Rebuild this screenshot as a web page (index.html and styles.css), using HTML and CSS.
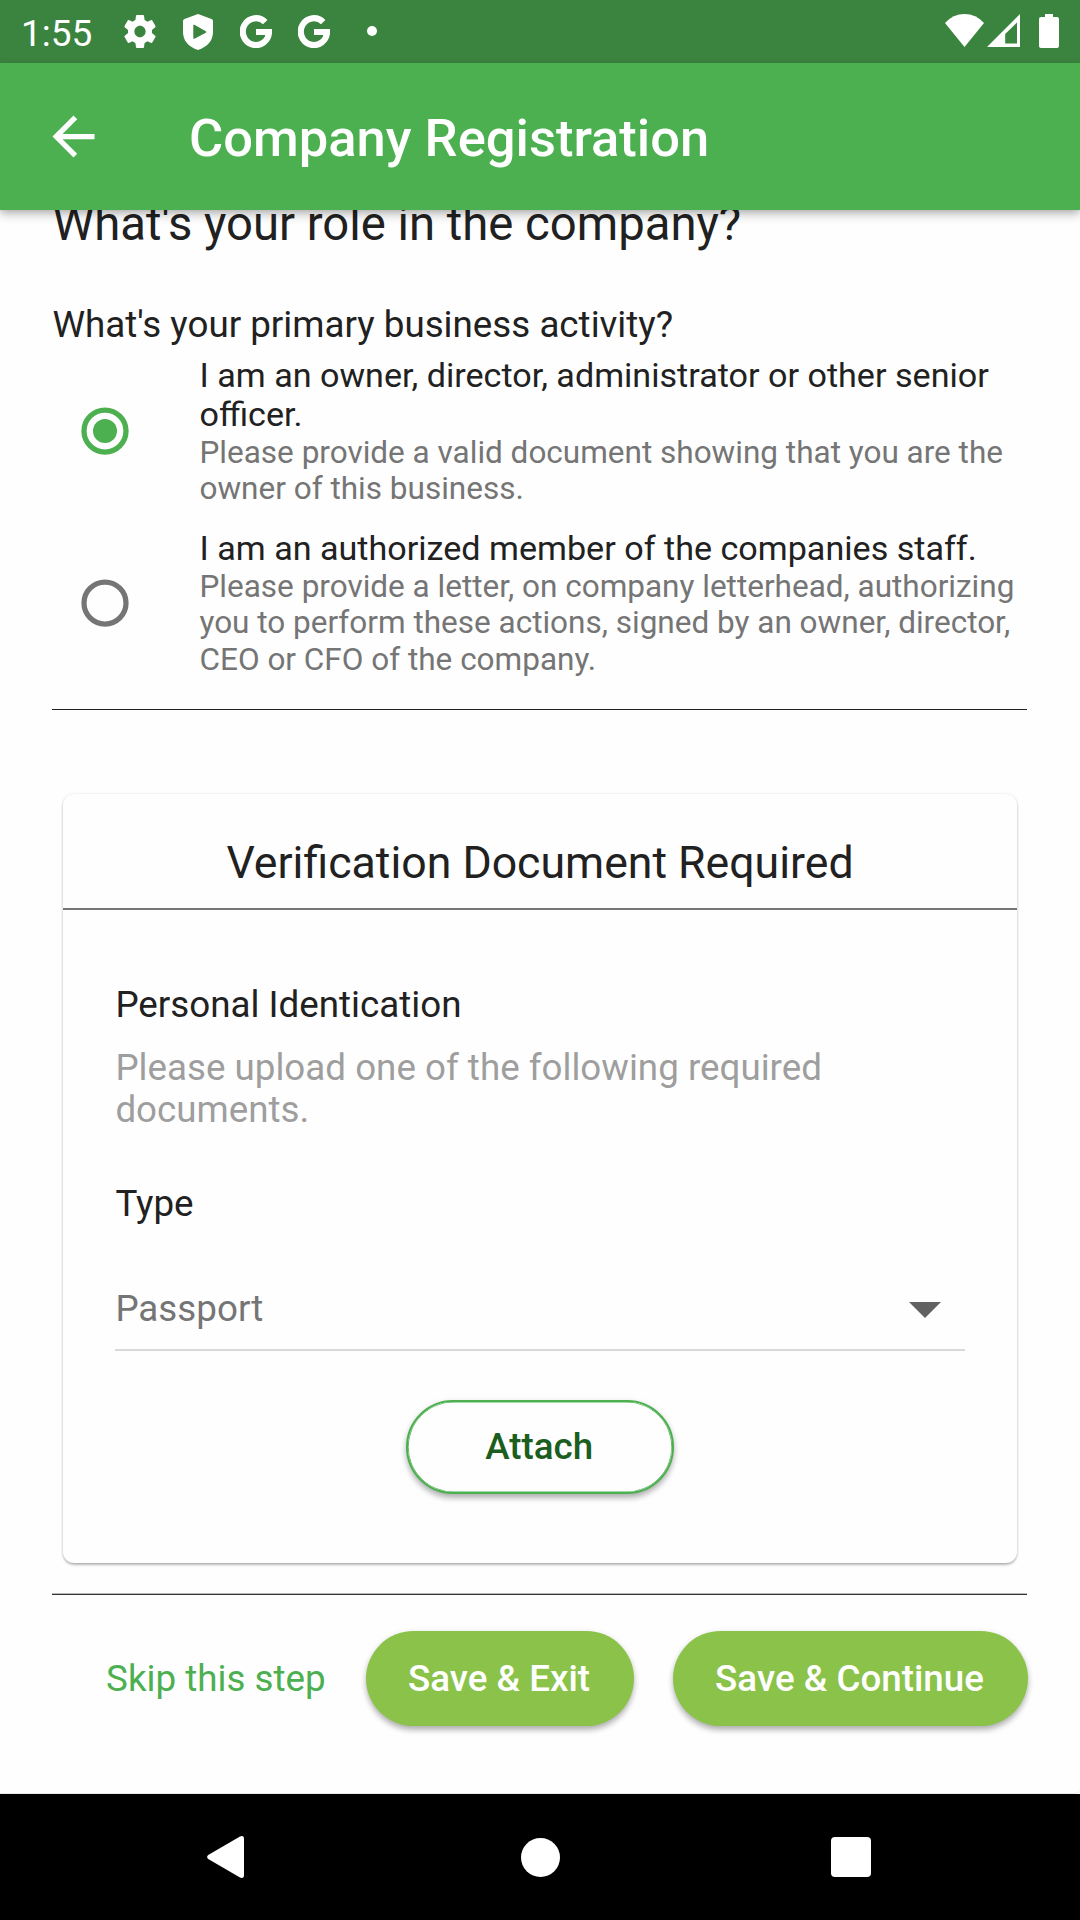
FILE: index.html
```html
<!DOCTYPE html>
<html lang="en">
<head>
<meta charset="utf-8">
<title>Company Registration</title>
<link rel="stylesheet" href="styles.css">
</head>
<body>
<div class="screen">
  <div class="status-bar">
    <span class="clock">1:55</span>
    <div class="notifications">
      <svg class="icon-gear" viewBox="2 2 20 20" preserveAspectRatio="none"><path fill="#fff" d="M19.43 12.98c.04-.32.07-.64.07-.98s-.03-.66-.07-.98l2.11-1.65c.19-.15.24-.42.12-.64l-2-3.46c-.12-.22-.39-.3-.61-.22l-2.49 1c-.52-.4-1.08-.73-1.69-.98l-.38-2.65C14.46 2.18 14.25 2 14 2h-4c-.25 0-.46.18-.49.42l-.38 2.65c-.61.25-1.17.59-1.69.98l-2.49-1c-.23-.09-.49 0-.61.22l-2 3.46c-.13.22-.07.49.12.64l2.11 1.65c-.04.32-.07.65-.07.98s.03.66.07.98l-2.11 1.65c-.19.15-.24.42-.12.64l2 3.46c.12.22.39.3.61.22l2.49-1c.52.4 1.08.73 1.69.98l.38 2.65c.03.24.24.42.49.42h4c.25 0 .46-.18.49-.42l.38-2.65c.61-.25 1.17-.59 1.69-.98l2.49 1c.23.09.49 0 .61-.22l2-3.46c.12-.22.07-.49-.12-.64l-2.11-1.65zM12 15.5c-1.93 0-3.5-1.57-3.5-3.5s1.57-3.5 3.5-3.5 3.5 1.57 3.5 3.5-1.57 3.5-3.5 3.5z"/></svg>
      <svg class="icon-shield" viewBox="0 0 30 36"><path fill="#fff" fill-rule="evenodd" d="M15 0 28.500 5Q30 5.600 30 7V18C30 26.500 24.500 33 15 36 5.500 33 0 26.500 0 18V7Q0 5.600 1.500 5ZM10.300 11.500V24Q10.300 25.200 11.400 24.700L22.800 18.700Q23.700 18 22.800 17.300L11.400 10.800Q10.300 10.300 10.300 11.500Z"/></svg>
      <svg class="icon-g" viewBox="0 0 32 33"><path fill="none" stroke="#fff" stroke-width="6.200" d="M25.200 7.200A13.100 13.400 0 1 0 29 17H16"/></svg>
      <svg class="icon-g" viewBox="0 0 32 33"><path fill="none" stroke="#fff" stroke-width="6.200" d="M25.200 7.200A13.100 13.400 0 1 0 29 17H16"/></svg>
      <span class="more-dot"></span>
    </div>
    <div class="indicators">
      <svg class="icon-wifi" viewBox="0 0 39 33"><path fill="#fff" d="M0 9Q8 0 19.500 0T39 9L19.500 33Z"/></svg>
      <svg class="icon-signal" viewBox="0 0 33 33"><path fill="#fff" fill-rule="evenodd" d="M33 0V33H0ZM30 8.500 18.200 20V29.500H30Z"/></svg>
      <svg class="icon-battery" viewBox="0 0 20 34"><path fill="#fff" d="M6 0H14V3H18Q20 3 20 5V32Q20 34 18 34H2Q0 34 0 32V5Q0 3 2 3H6Z"/></svg>
    </div>
  </div>

  <header class="app-bar">
    <svg class="icon-back" viewBox="0 0 24 24"><path fill="#fff" d="M20 11H7.830l5.590-5.590L12 4l-8 8 8 8 1.410-1.410L7.830 13H20v-2z"/></svg>
    <h1 class="app-title">Company Registration</h1>
  </header>

  <main class="content">
    <h2 class="role-heading">What's your role in the company?</h2>
    <h3 class="question">What's your primary business activity?</h3>

    <div class="option">
      <svg class="radio" viewBox="0 0 48 48"><circle cx="24" cy="24" r="21" fill="none" stroke="#4caf50" stroke-width="5.250"/><circle cx="24" cy="24" r="12" fill="#4caf50"/></svg>
      <div class="option-text">
        <div class="option-title">I am an owner, director, administrator or other senior<br>officer.</div>
        <div class="option-sub">Please provide a valid document showing that you are the<br>owner of this business.</div>
      </div>
    </div>
    <div class="option">
      <svg class="radio" viewBox="0 0 48 48"><circle cx="24" cy="24" r="21" fill="none" stroke="#757575" stroke-width="5.250"/></svg>
      <div class="option-text">
        <div class="option-title">I am an authorized member of the companies staff.</div>
        <div class="option-sub">Please provide a letter, on company letterhead, authorizing<br>you to perform these actions, signed by an owner, director,<br>CEO or CFO of the company.</div>
      </div>
    </div>
    <hr class="divider divider-top">

    <section class="card">
      <h2 class="card-title">Verification Document Required</h2>
      <div class="card-body">
        <h3 class="label">Personal Identication</h3>
        <p class="hint">Please upload one of the following required<br>documents.</p>
        <div class="label type-label">Type</div>
        <div class="select">
          <span>Passport</span>
          <svg class="icon-caret" viewBox="0 0 32 16"><path fill="#616161" d="M0 0H32L16 16Z"/></svg>
        </div>
        <button class="btn btn-outline">Attach</button>
      </div>
    </section>
    <hr class="divider divider-bottom">

    <div class="actions">
      <a class="skip">Skip this step</a>
      <button class="btn btn-exit">Save &amp; Exit</button>
      <button class="btn btn-continue">Save &amp; Continue</button>
    </div>
  </main>

  <nav class="nav-bar">
    <svg class="nav-back" viewBox="0 0 37 42"><path fill="#fff" d="M1.200 19 33 .500Q37-1 37 3V39Q37 43 33 41.500L1.200 23Q-1 21 1.200 19Z"/></svg>
    <span class="nav-home"></span>
    <span class="nav-recent"></span>
  </nav>
</div>
</body>
</html>
```
FILE: styles.css
```css
* { box-sizing: border-box; margin: 0; padding: 0; }
body { font-family: Roboto, "Liberation Sans", sans-serif; font-size: 36.75px; color: #212121; background: #fefefe; }
h1, h2, h3 { font-weight: 400; }
svg { display: block; flex: none; }

.screen { width: 1080px; height: 1920px; display: flex; flex-direction: column; overflow: hidden; }

.status-bar { height: 63px; flex: none; display: flex; background: #3b843f; color: #fff; }
.clock { width: 124px; padding-left: 21px; font-size: 37px; line-height: 67px; }
.notifications { display: flex; align-items: flex-start; padding-top: 15px; }
.icon-gear { width: 32px; height: 33px; }
.icon-shield { width: 30px; height: 36px; margin: -1px 27px 0; }
.icon-g { width: 32px; height: 33px; margin-right: 26px; }
.more-dot { width: 10px; height: 10px; margin: 11px 0 0 11px; border-radius: 50%; background: #fff; }
.indicators { display: flex; margin-left: auto; padding: 14px 21px 0 0; }
.icon-wifi { width: 39px; height: 33px; }
.icon-signal { width: 33px; height: 33px; margin-left: 3px; }
.icon-battery { width: 20px; height: 34px; margin-left: 19px; }

.app-bar { position: relative; z-index: 1; height: 147px; flex: none; display: flex; align-items: center; padding-left: 42px; background: #4caf50; color: #fff; box-shadow: 0 5px 10px rgba(0, 0, 0, .2), 0 2px 6px rgba(0, 0, 0, .14); }
.icon-back { width: 63px; height: 63px; }
.app-title { margin-left: 84px; padding-top: 3px; font-size: 52.5px; font-weight: 500; line-height: 62px; }

.content { flex: 1; min-height: 0; overflow: hidden; padding: 0 52px 0 52.4px; border-bottom: 1px solid #e8e8e8; border-bottom-right-radius: 5px; background: #fefefe; }
.role-heading { margin-top: -13px; font-size: 47.25px; line-height: 55px; }
.question { margin-top: 51px; font-size: 36.75px; line-height: 43px; }
.option { display: flex; align-items: center; margin-top: 21px; padding-left: 28.6px; }
.question + .option { margin-top: 10px; }
.radio { width: 48px; height: 48px; margin: 0 70.5px 2px 0; }
.option-text { white-space: nowrap; }
.option-title { font-size: 34.125px; line-height: 39px; }
.option-sub { padding-top: .6px; font-size: 31.5px; line-height: 36.75px; color: #757575; }
.divider { border: 0; height: 1px; width: 975px; background: #212121; }
.divider-top { margin-top: 30.05px; }

.card { width: 954px; height: 769px; margin: 84px 10.6px 0; border-radius: 11px; background: #fefefe; box-shadow: 0 3px 3px -1px rgba(0, 0, 0, .16), 0 1px 3px rgba(0, 0, 0, .25); }
.card-title { height: 116px; padding-top: 43px; border-bottom: 2px solid #777; font-size: 44.625px; line-height: 52px; text-align: center; }
.card-body { display: flex; flex-direction: column; padding: 73px 52px 0 52.4px; }
.label { font-size: 36.75px; line-height: 43px; }
.hint { margin-top: 21px; line-height: 42px; color: #9e9e9e; }
.type-label { margin-top: 51px; }
.select { display: flex; justify-content: space-between; align-items: center; height: 64px; margin-top: 62px; padding: 0 24px 19px 0; border-bottom: 2px solid #d9d9d9; color: #757575; }
.icon-caret { width: 32px; height: 16px; margin-top: 3px; }

.btn { border: 0; border-radius: 48px; height: 95px; font: 500 36.75px/43px Roboto, "Liberation Sans", sans-serif; color: #fff; background: #8bc34a; box-shadow: 0 5px 6px -1px rgba(0, 0, 0, .22), 0 2px 6px rgba(0, 0, 0, .16); }
.btn-outline { width: 268px; height: 94px; margin: 49px auto 0; padding-right: 2px; border: 2px solid #4caf50; color: #1b5e20; background: #fefefe; box-shadow: inset 0 0 0 .6px #4caf50, 0 5px 6px -1px rgba(0, 0, 0, .22), 0 2px 6px rgba(0, 0, 0, .16); }
.divider-bottom { height: 2px; margin-top: 30px; background: linear-gradient(#bbb 50%, #333 50%); }
.actions { display: flex; justify-content: flex-end; align-items: center; margin-top: 36px; }
.skip { margin-right: 40.4px; color: #4caf50; }
.btn-exit { width: 268px; margin-right: 39px; padding-right: 2px; }
.btn-continue { width: 355px; padding-right: 2px; }

.nav-bar { height: 126px; flex: none; display: flex; align-items: center; padding-left: 207px; background: #000; }
.nav-back { width: 37px; height: 42px; }
.nav-home { width: 39px; height: 39px; margin-left: 276.5px; border-radius: 50%; background: #fff; }
.nav-recent { width: 40px; height: 40px; margin-left: 271.5px; border-radius: 4px; background: #fff; }
```
